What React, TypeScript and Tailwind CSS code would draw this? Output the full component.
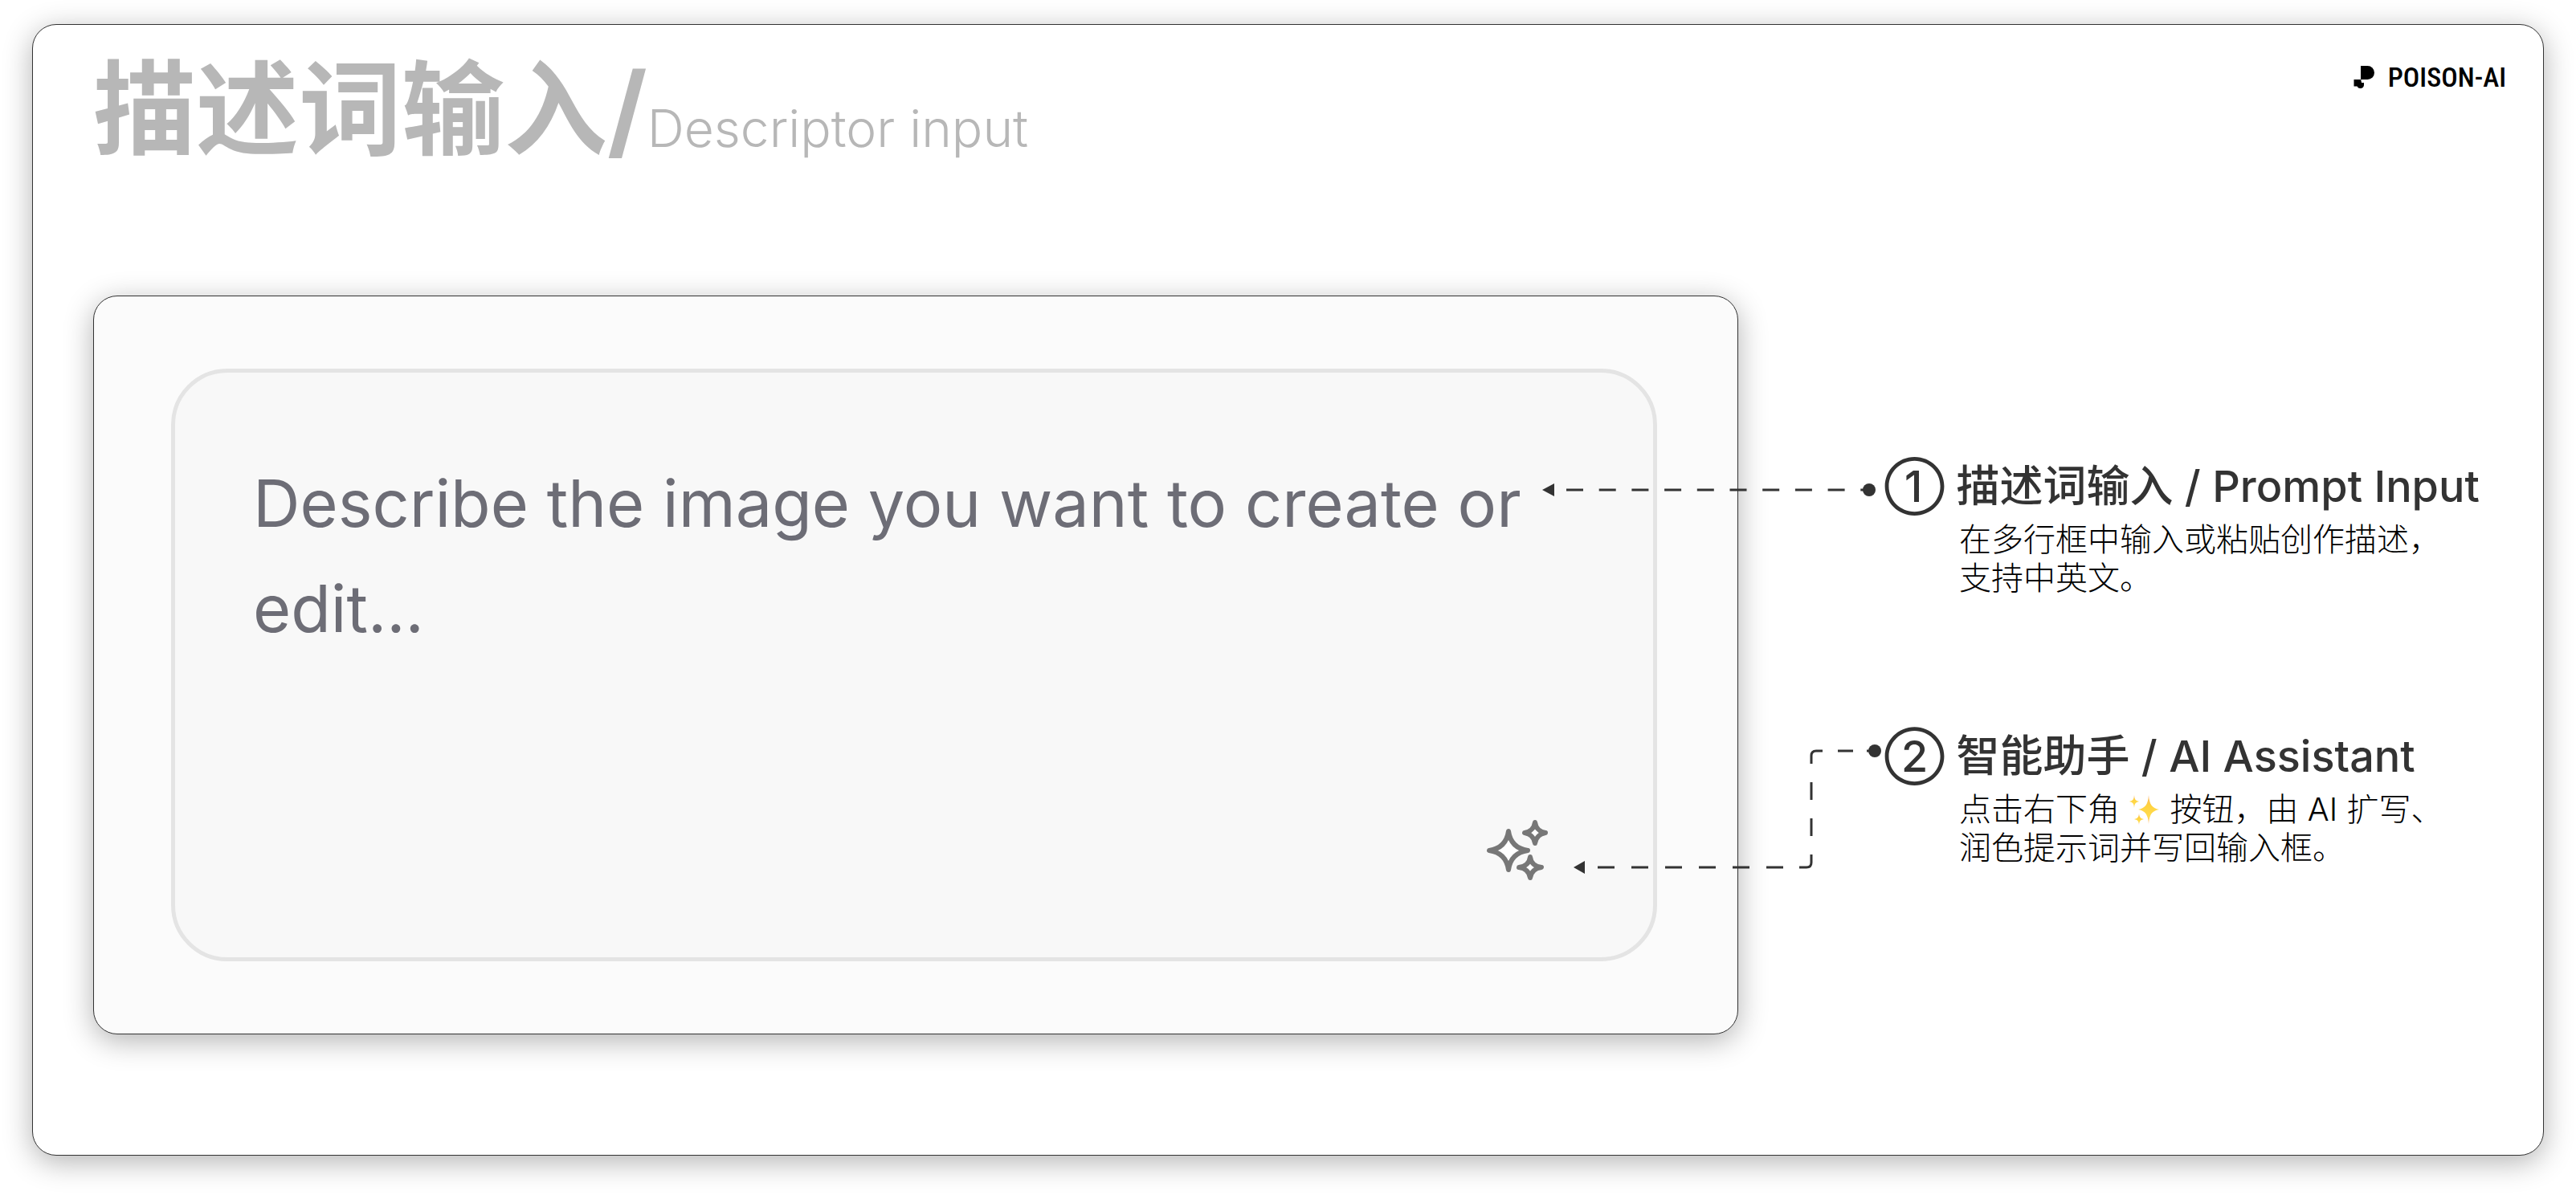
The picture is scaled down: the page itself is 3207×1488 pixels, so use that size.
import React, { useState } from 'react';

interface CalloutProps {
  title: string;
  children: React.ReactNode;
  connector: React.ReactNode;
}

function LogoMark() {
  return (
    <svg className="w-[26px] h-[30px]" viewBox="0 0 26 30" fill="#000" aria-hidden="true">
      <path d="M9 1h8.500a8.500 8.500 0 0 1 0 17H9z" />
      <path d="M0.500 18H9v-1l1 5h3v3a4.500 4.500 0 0 1-8.500 1.500H0.500z" />
    </svg>
  );
}

function AssistIcon() {
  return (
    <svg
      className="w-[84px] h-[84px]"
      viewBox="0 0 84 84"
      fill="#fff"
      stroke="#777"
      strokeWidth="6"
      strokeLinejoin="round"
      aria-hidden="true"
    >
      <path d="M32 19c2 14 10 22 24 24c-14 2-22 10-24 24c-2-14-10-22-24-24c14-2 22-10 24-24z" />
      <path d="M65 8c1 7 6 12 13 13c-7 1-12 6-13 13c-1-7-6-12-13-13c7-1 12-6 13-13z" />
      <path d="M59 51c1 8 6 12 14 13c-8 1-13 6-14 13c-1-7-6-12-14-13c8-1 13-5 14-13z" />
    </svg>
  );
}

function SparklesEmoji() {
  return (
    <svg className="inline-block w-[40px] h-[40px] align-[-6px]" viewBox="0 0 40 40" role="img" aria-label="✨">
      <defs>
        <linearGradient id="spark" x1="0" y1="0" x2="0" y2="1">
          <stop offset="0" stopColor="#fbb36b" />
          <stop offset="0.35" stopColor="#ffd23f" />
          <stop offset="0.75" stopColor="#ffdc4f" />
          <stop offset="1" stopColor="#fcb98a" />
        </linearGradient>
      </defs>
      <g fill="url(#spark)">
        <path d="M25 2c1 12 4 16 13 18c-9 2-12 6-13 18c-1-12-4-16-13-18c9-2 12-6 13-18z" />
        <path d="M7 2c.5 6 2 7 6 8c-4 1-5.500 2-6 8c-.5-6-2-7-6-8c4-1 5.500-2 6-8z" />
        <path d="M13 25c.5 5 2 6 6 7c-4 1-5.500 2-6 7c-.5-5-2-6-6-7c4-1 5.500-2 6-7z" />
      </g>
    </svg>
  );
}

function PromptConnector() {
  return (
    <svg
      className="absolute right-full top-[36px] w-[430px] h-[20px] pointer-events-none"
      viewBox="0 0 430 20"
      fill="none"
      stroke="#333"
      strokeWidth="3"
      aria-hidden="true"
    >
      <path d="M4 10l15-8v16z" fill="#333" stroke="none" />
      <path d="M34 10H410" strokeDasharray="21 19.7" />
      <circle cx="411" cy="10" r="8" fill="#333" stroke="none" />
    </svg>
  );
}

function AssistantConnector() {
  return (
    <svg
      className="absolute right-full top-[24px] w-[390px] h-[170px] pointer-events-none"
      viewBox="0 0 390 170"
      fill="none"
      stroke="#333"
      strokeWidth="3"
      aria-hidden="true"
    >
      <path d="M3 156l14-8v16z" fill="#333" stroke="none" />
      <path d="M33 156H270" strokeDasharray="21 21" />
      <path d="M284 156h9q6 0 6-6v-10" />
      <path d="M299 117V40" strokeDasharray="22 23" />
      <path d="M299 27V17q0-6 6-6h8" />
      <path d="M332 11h19M368 11h8" />
      <circle cx="378" cy="11" r="8" fill="#333" stroke="none" />
    </svg>
  );
}

function Callout({ title, children, connector }: CalloutProps) {
  return (
    <article className="relative">
      {connector}
      <h2 className="text-[54px] leading-[84px] font-medium text-[#333] whitespace-nowrap">{title}</h2>
      <p className="pl-[93px] text-[40px] leading-[48px] font-light text-black whitespace-nowrap">{children}</p>
    </article>
  );
}

export default function App() {
  const [prompt, setPrompt] = useState('');

  return (
    <div className="bg-white px-[40px] pt-[30px] pb-[50px] font-['Inter','Noto_Sans_CJK_SC',sans-serif]">
      <main className="rounded-[30px] border border-[#333] bg-white pl-[75px] pr-[46px] pb-[150px] shadow-[0_8px_36px_rgba(0,0,0,0.3)]">
        <header className="flex items-start justify-between h-[337px]">
          <h1 className="pt-[16px] text-[128px] leading-[180px] font-bold text-[#b7b7b7] whitespace-nowrap">
            描述词输入/<span className="text-[64px] font-light">Descriptor input</span>
          </h1>
          <div className="flex items-center gap-[17px] pt-[45px]">
            <LogoMark />
            <span className="font-['Liberation_Sans_Narrow','Roboto_Condensed',sans-serif] text-[34px] leading-[40px] font-medium text-black">
              POISON-AI
            </span>
          </div>
        </header>

        <div className="flex gap-[182px]">
          <section className="flex-1 rounded-[30px] border border-[#333] bg-[#fbfbfb] pl-[96px] pr-[100px] py-[90px] shadow-[0_8px_36px_rgba(0,0,0,0.3)]">
            <div className="relative">
              <textarea
                aria-label="Prompt"
                value={prompt}
                onChange={(e) => setPrompt(e.target.value)}
                placeholder="Describe the image you want to create or edit..."
                className="block w-full h-[738px] resize-none rounded-[70px] border-[5px] border-[#e4e4e4] bg-[#f8f8f8] px-[97px] pt-[98px] text-[81px] leading-[131px] text-[#6d6d76] placeholder:text-[#6d6d76] outline-none"
              />
              <button type="button" aria-label="AI Assistant" className="absolute right-[133px] bottom-[97px]">
                <AssistIcon />
              </button>
            </div>
          </section>

          <aside className="w-[774px] pt-[196px] flex flex-col gap-[156px]">
            <Callout title="① 描述词输入 / Prompt Input" connector={<PromptConnector />}>
              在多行框中输入或粘贴创作描述，
              <br />
              支持中英文。
            </Callout>
            <Callout title="② 智能助手 / AI Assistant" connector={<AssistantConnector />}>
              点击右下角 <SparklesEmoji /> 按钮，由 AI 扩写、
              <br />
              润色提示词并写回输入框。
            </Callout>
          </aside>
        </div>
      </main>
    </div>
  );
}
